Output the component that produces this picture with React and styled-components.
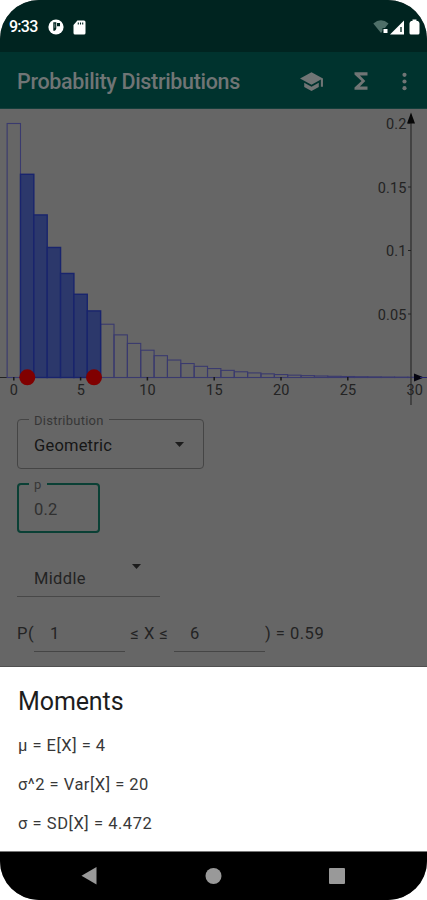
import React from "react";
import styled, { createGlobalStyle } from "styled-components";

const GlobalStyle = createGlobalStyle`
  * { box-sizing: border-box; }
  body { margin: 0; background: #fff; font-family: Roboto, "Open Sans", sans-serif; }
`;

const Phone = styled.div`
  width: 427px;
  height: 900px;
  display: flex;
  flex-direction: column;
  overflow: hidden;
  border-radius: 39px;
  background: #666;
`;

const StatusBar = styled.header`
  height: 52px;
  flex: none;
  display: flex;
  align-items: center;
  padding: 2px 5px 0 9px;
  background: #002420;
  color: #fff;
`;

const Clock = styled.span`
  width: 39px;
  font-size: 16px;
  font-weight: 500;
  line-height: 20px;
  letter-spacing: -0.75px;
`;

const StatusIcons = styled.div`
  display: flex;
  align-items: center;
  gap: ${(p) => p.$gap}px;
  margin-left: ${(p) => (p.$end ? "auto" : "0")};
`;

const AppBar = styled.div`
  height: 57px;
  flex: none;
  display: flex;
  align-items: center;
  padding: 2px 4px 0 17px;
  background: #00332e;
  border-bottom: 1px solid #143f3b;
  color: #707575;
`;

const AppTitle = styled.h1`
  margin: 0;
  flex: 1;
  font-size: 21.5px;
  font-weight: 500;
  line-height: 28px;
  white-space: nowrap;
  letter-spacing: -0.33px;
  position: relative;
  top: 1px;
`;

const Actions = styled.div`
  display: flex;
  align-items: center;
`;

const IconButton = styled.button`
  border: 0;
  padding: 0;
  background: none;
  color: inherit;
  display: grid;
  place-items: center;
  width: ${(p) => p.$width}px;
  height: 40px;
`;

const Chart = styled.svg`
  display: block;
  flex: none;
`;

const AxisLabel = styled.text`
  font-family: Roboto, sans-serif;
  font-size: 14.5px;
  letter-spacing: 0.15px;
  fill: #232323;
`;

const Form = styled.main`
  height: 261px;
  flex: none;
  padding: 13px 17px 0;
  color: #232323;
  border-bottom: 1px solid #505050;
`;

const Field = styled.fieldset`
  margin: 0 0 ${(p) => p.$after}px;
  width: ${(p) => p.$width}px;
  height: 50px;
  min-width: 0;
  padding: 0 17px;
  position: relative;
  border: 0;
  display: flex;
  align-items: center;
  justify-content: space-between;
  font-size: 16.5px;
  letter-spacing: 0.2px;
  color: ${(p) => (p.$focused ? "#303030" : "#161616")};
`;

const Outline = styled.div`
  position: absolute;
  inset: 0;
  border: ${(p) => (p.$focused ? "2px solid #0a4035" : "1px solid #454545")};
  border-radius: 4px;
`;

const FloatingLabel = styled.label`
  position: absolute;
  top: -6px;
  left: 12px;
  padding: 0 5px;
  background: #666;
  font-size: 13px;
  line-height: 16px;
  letter-spacing: 0.25px;
  color: #363636;
`;

const FieldValue = styled.span`
  position: relative;
  padding-top: 2px;
`;

const Caret = styled.svg`
  position: relative;
  margin-right: ${(p) => p.$end}px;
`;

const Spinner = styled.div`
  display: flex;
  align-items: center;
  justify-content: space-between;
  width: 143px;
  height: 36px;
  padding: 0 19px 0 17px;
  border-bottom: 1px solid #484848;
  font-size: 16.5px;
  letter-spacing: 0.35px;
`;

const CaretSlot = styled.span`
  display: flex;
  align-self: flex-start;
  padding-top: 3px;
`;

const Formula = styled.div`
  display: flex;
  margin-top: 19px;
  height: 36px;
  line-height: 35px;
  font-size: 16.5px;
  letter-spacing: 0.5px;
  white-space: pre;
`;

const FormulaText = styled.span`
  width: ${(p) => p.$width}px;
  text-align: ${(p) => p.$align || "left"};
`;

const Bound = styled.span`
  width: 91px;
  height: 36px;
  padding-left: 16px;
  border-bottom: 1px solid #454545;
`;

const Sheet = styled.section`
  height: 184px;
  flex: none;
  padding: 17px 18px 0;
  background: #fff;
  color: #1d1d1d;
`;

const SheetTitle = styled.h2`
  margin: 0 0 8px;
  font-size: 25px;
  font-weight: 400;
  line-height: 35px;
  letter-spacing: -0.1px;
`;

const Moment = styled.p`
  margin: 0;
  height: 39px;
  line-height: 38px;
  font-size: 16.5px;
  letter-spacing: ${(p) => p.$tracking}px;
  color: #383838;
`;

const NavBar = styled.nav`
  height: 49px;
  flex: none;
  display: flex;
  justify-content: space-between;
  align-items: center;
  padding: 0 81px 0 80px;
  background: #000;
  border-top: 1px solid #777;
`;

const BASE = 268.5;
const SCALE = 1270;
const STEP = 13.36;
const ORIGIN = 13.8;

const bars = Array.from({ length: 31 }, (_, k) => {
  const height = 0.2 * Math.pow(0.8, k) * SCALE;
  return { k, height, x: ORIGIN + (k - 0.5) * STEP, selected: k >= 1 && k <= 6 };
});

function Histogram() {
  return (
    <Chart width="427" height="297" viewBox="0 0 427 297">
      <path d="M0 268.5H416" stroke="#222" strokeWidth="1.2" />
      {bars.filter((b) => !b.selected).map((b) => (
        <rect key={b.k} x={b.x} y={BASE - b.height} width={STEP} height={b.height}
          fill="none" stroke="#3a3a6e" strokeWidth="1.1" />
      ))}
      {bars.filter((b) => b.selected).map((b) => (
        <rect key={b.k} x={b.x} y={BASE - b.height} width={STEP} height={b.height}
          fill="#2c386b" stroke="#19246d" strokeWidth="1.4" />
      ))}
      <path d="M411 8V296" stroke="#303030" strokeWidth="1.3" />
      <path d="M411 3.5L415 14.5H407Z" fill="#060606" />
      <path d="M414 264.5L424 268.5L414 272.5Z" fill="#050510" />
      <path d="M420 268.5H427" stroke="#24246b" strokeWidth="1" />
      {[0, 5, 10, 15, 20, 25, 30].map((n) => (
        <g key={n}>
          {n < 30 && <path d={`M${ORIGIN + n * STEP} 268V271.5`} stroke="#181818" strokeWidth="1.5" />}
          <AxisLabel x={ORIGIN + n * STEP + 0.2} y="286" textAnchor="middle">{n}</AxisLabel>
        </g>
      ))}
      {[0.2, 0.15, 0.1, 0.05].map((n) => (
        <g key={n}>
          <path d={`M408 ${BASE - n * SCALE}H411`} stroke="#222" />
          <AxisLabel x="406.5" y={BASE - n * SCALE + 5.5} textAnchor="end">{n}</AxisLabel>
        </g>
      ))}
      <circle cx="27.3" cy="268.3" r="8" fill="#800000" />
      <circle cx="94" cy="268.3" r="8" fill="#800000" />
    </Chart>
  );
}

function Dropdown({ end = 0 }) {
  return <Caret $end={end} width="9" height="5" viewBox="0 0 9 5"><path d="M0 0H9L4.5 5Z" fill="#1c1c1c" /></Caret>;
}

export default function App() {
  return (
    <>
      <GlobalStyle />
      <Phone>
        <StatusBar>
          <Clock>9:33</Clock>
          <StatusIcons $gap={9}>
            <svg width="16" height="16" viewBox="0 0 16 16">
              <circle cx="8" cy="8" r="7.6" fill="#fff" />
              <path d="M5.3 3.2h3v6.1a2.5 2.5 0 0 1-3 2.5Z" fill="#002420" />
              <path d="M6.3 4.5h1v4.3h-1Z" fill="#6d8380" />
              <path d="M9 4h3v3.3H9Z" fill="#002420" />
            </svg>
            <svg width="13" height="15" viewBox="0 0 13 15">
              <path d="M4.4.5H11q1.5 0 1.5 1.5v11q0 1.5-1.5 1.5H2Q.5 14.5.5 13V5Z" fill="#fff" />
              <path d="M5.3 2.4v2M7.5 2.4v2M9.7 2.4v2" stroke="#002420" strokeWidth="1.1" />
            </svg>
          </StatusIcons>
          <StatusIcons $end $gap={1}>
            <svg width="16" height="14" viewBox="0 0 16 14">
              <path d="M.3 3.4Q8-2.7 15.5 3.4L8 13Z" fill="#4e6f68" />
              <path d="M9.5 8h6v5.5h-6Z" fill="#002420" />
              <path d="M10.5 9h4v4h-4Z" fill="#fff" />
            </svg>
            <svg width="15" height="15" viewBox="0 0 15 15">
              <path d="M0 14.5L14 .5V14.5Z" fill="#fff" />
              <path d="M11 7v5" stroke="#385650" strokeWidth="1.7" />
            </svg>
            <svg width="16" height="16" viewBox="0 0 16 16">
              <path d="M6.5 2V.5h4V2h1.5Q13.5 3 13.5 4.500V14q0 1.500-1.500 1.500h-7Q3.500 15.500 3.500 14V4.500Q3.500 3 5 2Z" fill="#fff" />
            </svg>
          </StatusIcons>
        </StatusBar>
        <AppBar>
          <AppTitle>Probability Distributions</AppTitle>
          <Actions>
            <IconButton $width={50} aria-label="Learn">
              <svg width="25" height="25" viewBox="0 0 24 24" fill="currentColor">
                <path d="M5 13.18v4L12 21l7-3.82v-4L12 17l-7-3.82zM12 3L1 9l11 6 9-4.91V17h2V9L12 3z" />
              </svg>
            </IconButton>
            <IconButton $width={49} aria-label="Sum">
              <svg width="26" height="26" viewBox="0 0 24 24" fill="currentColor">
                <path d="M18 4H6v2l6.5 6L6 18v2h12v-3h-7l5-5-5-5h7z" />
              </svg>
            </IconButton>
            <IconButton $width={38} aria-label="More">
              <svg width="25" height="25" viewBox="0 0 24 24" fill="currentColor">
                <circle cx="12" cy="5.6" r="2" /><circle cx="12" cy="12" r="2" /><circle cx="12" cy="18.4" r="2" />
              </svg>
            </IconButton>
          </Actions>
        </AppBar>
        <Histogram />
        <Form>
          <Field $width={187} $after={14}>
            <Outline />
            <FloatingLabel>Distribution</FloatingLabel>
            <FieldValue>Geometric</FieldValue>
            <Dropdown end={3} />
          </Field>
          <Field $width={83} $after={28} $focused>
            <Outline $focused />
            <FloatingLabel>p</FloatingLabel>
            <FieldValue>0.2</FieldValue>
          </Field>
          <Spinner>Middle<CaretSlot><Dropdown /></CaretSlot></Spinner>
          <Formula>
            <FormulaText $width={17}>P(</FormulaText>
            <Bound>1</Bound>
            <FormulaText $width={49} $align="center">≤ X ≤</FormulaText>
            <Bound>6</Bound>
            <FormulaText $width={80}>) = 0.59</FormulaText>
          </Formula>
        </Form>
        <Sheet>
          <SheetTitle>Moments</SheetTitle>
          <Moment $tracking={0.5}>μ = E[X] = 4</Moment>
          <Moment $tracking={0.5}>σ^2 = Var[X] = 20</Moment>
          <Moment $tracking={0.55}>σ = SD[X] = 4.472</Moment>
        </Sheet>
        <NavBar>
          <svg width="18" height="20" viewBox="0 0 18 20"><path d="M1.5 9.7L16.5 1V18.5Z" fill="#999" /></svg>
          <svg width="18" height="18" viewBox="0 0 18 18"><circle cx="9.5" cy="9" r="8" fill="#999" /></svg>
          <svg width="18" height="18" viewBox="0 0 18 18"><rect x="1" y="1" width="16" height="16" rx="1" fill="#999" /></svg>
        </NavBar>
      </Phone>
    </>
  );
}
